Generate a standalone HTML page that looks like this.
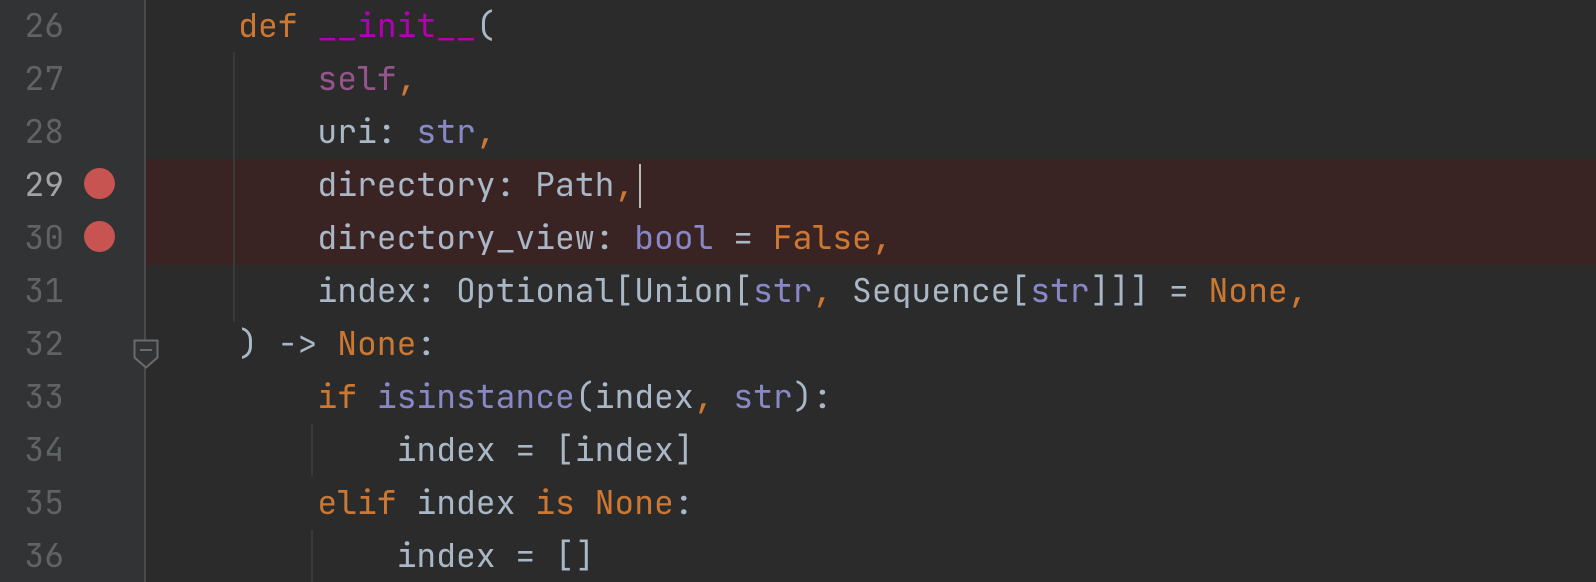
<!DOCTYPE html>
<html><head><meta charset="utf-8"><style>
html,body{margin:0;padding:0;}
body{width:1596px;height:582px;overflow:hidden;background:#2b2b2b;position:relative;font-family:"JetBrains Mono","Liberation Mono",monospace;font-size:33px;font-variant-ligatures:none;font-feature-settings:"calt" 0,"liga" 0;}
.gutter{position:absolute;left:0;top:0;width:145px;height:582px;background:#313335;}
.sep{position:absolute;left:144px;top:0;width:2px;height:582px;background:#4a4b4d;}
.hl{position:absolute;left:146px;width:1450px;height:53px;background:#3a2323;}
.ln{position:absolute;left:0;width:64px;text-align:right;color:#606366;line-height:53px;height:53px;}
.ln.cur{color:#a4a3a3;}
.code{position:absolute;left:159px;line-height:53px;height:53px;white-space:pre;color:#a9b7c6;}
.bp{position:absolute;left:84px;width:31px;height:31px;border-radius:50%;background:#c75450;}
.guide{position:absolute;width:2px;background:#393939;}
.k{color:#cc7832}.m{color:#b200b2}.s{color:#94558d}.b{color:#8888c6}
.caret{position:absolute;left:639px;top:164px;width:2px;height:44px;background:#bbbbbb;}
</style></head><body>
<div class="gutter"></div>
<div class="sep"></div>
<div class="hl" style="top:159px"></div>
<div class="hl" style="top:212px"></div>
<div class="guide" style="left:233px;top:52px;height:270px"></div>
<div class="guide" style="left:311px;top:424px;height:52px"></div>
<div class="guide" style="left:311px;top:530px;height:52px"></div>

<div class="ln" style="top:-1px">26</div>
<div class="ln" style="top:52px">27</div>
<div class="ln" style="top:105px">28</div>
<div class="ln cur" style="top:158px">29</div>
<div class="ln" style="top:211px">30</div>
<div class="ln" style="top:264px">31</div>
<div class="ln" style="top:317px">32</div>
<div class="ln" style="top:370px">33</div>
<div class="ln" style="top:423px">34</div>
<div class="ln" style="top:476px">35</div>
<div class="ln" style="top:529px">36</div>

<div class="bp" style="top:168px"></div>
<div class="bp" style="top:221px"></div>

<svg style="position:absolute;left:0;top:0" width="160" height="582">
<path d="M134.5 340.5 H157.5 V357.5 L146 367.5 L134.5 357.5 Z" fill="#313335" stroke="#6a6b6d" stroke-width="2"/>
<line x1="140" y1="350" x2="152" y2="350" stroke="#6a6b6d" stroke-width="2"/>
</svg>

<div class="code" style="top:-1px">    <span class="k">def</span> <span class="m">__init__</span>(</div>
<div class="code" style="top:52px">        <span class="s">self</span><span class="k">,</span></div>
<div class="code" style="top:105px">        uri: <span class="b">str</span><span class="k">,</span></div>
<div class="code" style="top:158px">        directory: Path<span class="k">,</span></div>
<div class="code" style="top:211px">        directory_view: <span class="b">bool</span> = <span class="k">False,</span></div>
<div class="code" style="top:264px">        index: Optional[Union[<span class="b">str</span><span class="k">,</span> Sequence[<span class="b">str</span>]]] = <span class="k">None,</span></div>
<div class="code" style="top:317px">    ) -&gt; <span class="k">None</span>:</div>
<div class="code" style="top:370px">        <span class="k">if</span> <span class="b">isinstance</span>(index<span class="k">,</span> <span class="b">str</span>):</div>
<div class="code" style="top:423px">            index = [index]</div>
<div class="code" style="top:476px">        <span class="k">elif</span> index <span class="k">is None</span>:</div>
<div class="code" style="top:529px">            index = []</div>
<div class="caret"></div>
</body></html>
